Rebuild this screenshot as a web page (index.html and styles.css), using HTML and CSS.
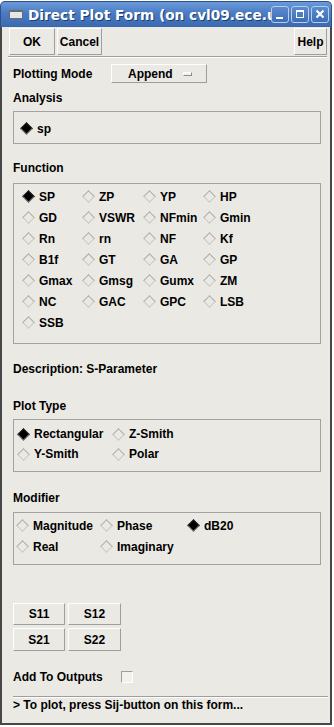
FILE: index.html
```html
<!DOCTYPE html>
<html lang="en">
<head>
  <meta charset="UTF-8" />
  <title>Direct Plot Form</title>
  <link rel="stylesheet" href="styles.css">
</head>
<body>

  <div class="window">
    <div class="titlebar">
      <span class="title-icon"></span>
      <span class="title">Direct Plot Form (on cvl09.ece.umass.edu)</span>
      <div class="title-buttons">
        <span class="tbtn">
          <svg width="16" height="15" viewBox="0 0 16 15"><rect x="4" y="10" width="7" height="2" fill="#fff"/></svg>
        </span>
        <span class="tbtn">
          <svg width="16" height="15" viewBox="0 0 16 15"><rect x="4.5" y="3.5" width="7" height="7" fill="none" stroke="#fff" stroke-width="1"/><rect x="4" y="3" width="8" height="2" fill="#fff"/></svg>
        </span>
        <span class="tbtn">
          <svg width="16" height="15" viewBox="0 0 16 15"><path d="M4.5 3.5 L11.5 10.5 M11.5 3.5 L4.5 10.5" stroke="#fff" stroke-width="2"/></svg>
        </span>
      </div>
    </div>

    <div class="body">
      <div class="toolbar">
        <button class="btn ok">OK</button>
        <button class="btn cancel">Cancel</button>
        <span class="spacer"></span>
        <button class="btn help">Help</button>
      </div>
      <div class="separator top-sep"></div>

      <div class="form">
        <div class="mode-row">
          <span class="mode-label">Plotting Mode</span>
          <button class="option">Append<span class="indicator"></span></button>
        </div>

        <div class="label section-first">Analysis</div>
        <div class="group analysis">
          <div class="radio"><span class="rb on"></span>sp</div>
        </div>

        <div class="label function-label">Function</div>
        <div class="group functions">
          <div class="radio"><span class="rb on"></span>SP</div>
          <div class="radio"><span class="rb"></span>ZP</div>
          <div class="radio"><span class="rb"></span>YP</div>
          <div class="radio"><span class="rb"></span>HP</div>
          <div class="radio"><span class="rb"></span>GD</div>
          <div class="radio"><span class="rb"></span>VSWR</div>
          <div class="radio"><span class="rb"></span>NFmin</div>
          <div class="radio"><span class="rb"></span>Gmin</div>
          <div class="radio"><span class="rb"></span>Rn</div>
          <div class="radio"><span class="rb"></span>rn</div>
          <div class="radio"><span class="rb"></span>NF</div>
          <div class="radio"><span class="rb"></span>Kf</div>
          <div class="radio"><span class="rb"></span>B1f</div>
          <div class="radio"><span class="rb"></span>GT</div>
          <div class="radio"><span class="rb"></span>GA</div>
          <div class="radio"><span class="rb"></span>GP</div>
          <div class="radio"><span class="rb"></span>Gmax</div>
          <div class="radio"><span class="rb"></span>Gmsg</div>
          <div class="radio"><span class="rb"></span>Gumx</div>
          <div class="radio"><span class="rb"></span>ZM</div>
          <div class="radio"><span class="rb"></span>NC</div>
          <div class="radio"><span class="rb"></span>GAC</div>
          <div class="radio"><span class="rb"></span>GPC</div>
          <div class="radio"><span class="rb"></span>LSB</div>
          <div class="radio"><span class="rb"></span>SSB</div>
        </div>

        <div class="label description">Description: S-Parameter</div>

        <div class="label plot-label">Plot Type</div>
        <div class="group plot-types">
          <div class="radio"><span class="rb on"></span>Rectangular</div>
          <div class="radio"><span class="rb"></span>Z-Smith</div>
          <div class="radio"><span class="rb"></span>Y-Smith</div>
          <div class="radio"><span class="rb"></span>Polar</div>
        </div>

        <div class="label modifier-label">Modifier</div>
        <div class="group modifiers">
          <div class="radio"><span class="rb"></span>Magnitude</div>
          <div class="radio"><span class="rb"></span>Phase</div>
          <div class="radio"><span class="rb on"></span>dB20</div>
          <div class="radio"><span class="rb"></span>Real</div>
          <div class="radio"><span class="rb"></span>Imaginary</div>
        </div>

        <div class="sparams">
          <button class="btn sbtn">S11</button>
          <button class="btn sbtn">S12</button>
          <button class="btn sbtn">S21</button>
          <button class="btn sbtn">S22</button>
        </div>

        <div class="outputs-row">
          <span class="outputs-label">Add To Outputs</span>
          <span class="checkbox"></span>
        </div>

        <div class="separator bottom-sep"></div>
        <div class="status">&gt; To plot, press Sij-button on this form...</div>
      </div>
    </div>
  </div>

</body>
</html>
```

FILE: styles.css
```css
body {
  margin: 0;
  background: #ffffff;
  font-family: 'Liberation Sans', Arial, sans-serif;
  font-size: 12px;
  font-weight: bold;
  color: #000;
}

.window {
  width: 332px;
  height: 725px;
  display: flex;
  flex-direction: column;
}

/* title bar */
.titlebar {
  height: 26px;
  margin-top: 1px;
  box-sizing: border-box;
  display: flex;
  align-items: center;
  padding-left: 8px;
  background: linear-gradient(#6a9ad9, #4a7bc2 45%, #3a69b0);
  border: 1px solid #2d5189;
  border-bottom: 0;
  border-radius: 5px 5px 0 0;
  overflow: hidden;
}

.title-icon {
  width: 14px;
  height: 9px;
  box-sizing: border-box;
  background: #e6e6e6;
  border: 1px solid #6a6a6a;
  border-top-width: 2px;
  margin-right: 5px;
  flex: none;
}

.title {
  flex: 1;
  min-width: 0;
  overflow: hidden;
  white-space: nowrap;
  font-family: 'DejaVu Sans', sans-serif;
  font-size: 13.7px;
  font-weight: bold;
  color: #ffffff;
  text-shadow: 1px 1px 0 #1e3d6e;
}

.title-buttons {
  display: flex;
  gap: 2px;
  padding-right: 2px;
  flex: none;
}

.tbtn {
  width: 18px;
  height: 17px;
  box-sizing: border-box;
  border: 1px solid #b9cdea;
  border-radius: 3px;
  background: linear-gradient(#5b8bd0, #3d6db4);
  display: flex;
  align-items: center;
  justify-content: center;
}

/* window body */
.body {
  flex: 1;
  display: flex;
  flex-direction: column;
  background: #ebe9e3;
  border: 2px solid #474747;
  border-top: 0;
}

.btn {
  font-family: 'Liberation Sans', Arial, sans-serif;
  font-size: 12px;
  font-weight: bold;
  color: #000;
  background: #ebe9e3;
  border: 1px solid;
  border-color: #ffffff #9e9e9e #9e9e9e #ffffff;
  padding: 0;
  margin: 0;
}

.toolbar {
  display: flex;
  gap: 2px;
  padding: 1px 3px 0 7px;
}

.toolbar .btn {
  height: 27px;
}

.ok { width: 46px; }
.cancel { width: 45px; }
.help { width: 33px; }

.spacer {
  flex: 1;
}

.separator {
  border-top: 1px solid #9e9e9e;
  border-bottom: 1px solid #ffffff;
}

.top-sep {
  margin: 1px 3px 0 6px;
}

.form {
  flex: 1;
  display: flex;
  flex-direction: column;
  padding: 0 2px 0 11px;
}

.mode-row {
  display: flex;
  align-items: center;
  margin-top: 6px;
  height: 19px;
}

.mode-label {
  width: 98px;
  line-height: 14px;
}

.option {
  width: 96px;
  height: 19px;
  box-sizing: border-box;
  display: flex;
  align-items: center;
  padding-left: 16px;
  font-family: 'Liberation Sans', Arial, sans-serif;
  font-size: 12px;
  font-weight: bold;
  background: #ebe9e3;
  border: 1px solid;
  border-color: #ffffff #9e9e9e #9e9e9e #ffffff;
}

.indicator {
  width: 9px;
  height: 4px;
  box-sizing: border-box;
  margin-left: auto;
  margin-right: 8px;
  background: #f4f3ef;
  border: 1px solid;
  border-color: #ffffff #8a8a8a #8a8a8a #ffffff;
}

.label {
  height: 14px;
  line-height: 14px;
}

.section-first { margin-top: 8px; }
.function-label { margin-top: 17px; }
.description { margin-top: 18px; }
.plot-label { margin-top: 23px; }
.modifier-label { margin-top: 19px; }

.group {
  width: 308px;
  box-sizing: border-box;
  border: 1px solid #a2a2a2;
  margin-top: 6px;
  display: grid;
  align-items: center;
}

.radio {
  display: flex;
  align-items: center;
  white-space: nowrap;
}

.rb {
  width: 9px;
  height: 9px;
  box-sizing: border-box;
  margin: 2px 6px 2px 2px;
  transform: rotate(45deg);
  border: 1px solid;
  border-color: #a9a9a9 #c6c6c6 #c6c6c6 #a9a9a9;
  background: #ebe9e3;
  flex: none;
}

.rb.on {
  background: #000;
  border-color: #2a2a2a #8c8c8c #8c8c8c #2a2a2a;
}

.analysis {
  grid-auto-rows: 21px;
  padding: 6px 0 4px 6px;
}

.functions {
  grid-template-columns: 60px 61px 60px auto;
  grid-auto-rows: 21px;
  padding: 2px 0 10px 8px;
  margin-top: 8px;
}

.plot-types {
  grid-template-columns: 95px auto;
  grid-auto-rows: 20px;
  padding: 4px 0 7px 3px;
}

.modifiers {
  grid-template-columns: 84px 87px auto;
  grid-auto-rows: 21px;
  padding: 2px 0 7px 2px;
  margin-top: 7px;
}

.sparams {
  display: grid;
  grid-template-columns: 52px 53px;
  grid-template-rows: 22px 23px;
  gap: 3px;
  margin-top: 38px;
}

.outputs-row {
  display: flex;
  align-items: center;
  height: 14px;
  margin-top: 19px;
}

.outputs-label {
  width: 108px;
  line-height: 14px;
}

.checkbox {
  width: 12px;
  height: 12px;
  box-sizing: border-box;
  background: #f2f1ed;
  border: 1px solid;
  border-color: #9e9e9e #ffffff #ffffff #9e9e9e;
}

.bottom-sep {
  margin-top: 12px;
}

.status {
  line-height: 14px;
}
```
